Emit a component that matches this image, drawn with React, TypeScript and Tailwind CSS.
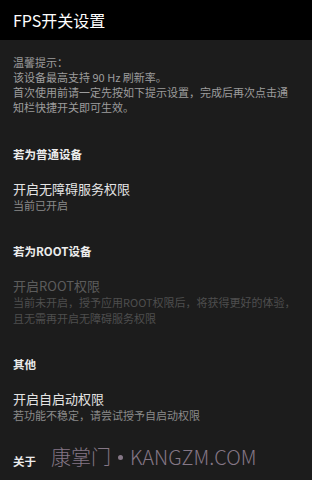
const font = "font-['Noto_Sans_CJK_SC','Noto_Sans',sans-serif]";

function SectionHeader({ label, className = "" }: { label: string; className?: string }) {
  return (
    <div className={`text-[11.5px] font-semibold leading-4 text-[#ececec] ${className}`}>{label}</div>
  );
}

function SettingItem({
  title,
  lines,
  disabled = false,
}: {
  title: string;
  lines: string[];
  disabled?: boolean;
}) {
  return (
    <div className="mt-[19px]">
      <div
        className={`text-[13px] leading-4 ${disabled ? "text-[#5c5c5c]" : "text-[#e4e4e4]"}`}
      >
        {title}
      </div>
      {lines.map((line) => (
        <div
          key={line}
          className={`whitespace-nowrap text-[11px] leading-4 ${
            disabled ? "text-[#4e4e4e]" : "text-[#8a8a8a]"
          }`}
        >
          {line}
        </div>
      ))}
    </div>
  );
}

export default function App() {
  return (
    <div className={`relative h-[480px] w-[312px] overflow-hidden bg-[#1c1c1c] ${font}`}>
      <header className="flex h-10 items-center bg-black px-[13px]">
        <h1 className="text-[16px] font-normal text-white">FPS开关设置</h1>
      </header>

      <div className="px-[13px]">
        <div className="pt-[15px] text-[11px] leading-[15px] text-[#9c9c9c]">
          <div>温馨提示：</div>
          <div>该设备最高支持 90 Hz 刷新率。</div>
          <div className="whitespace-nowrap">首次使用前请一定先按如下提示设置，完成后再次点击通</div>
          <div>知栏快捷开关即可生效。</div>
        </div>

        <SectionHeader label="若为普通设备" className="mt-[31px]" />
        <SettingItem title="开启无障碍服务权限" lines={["当前已开启"]} />

        <SectionHeader label="若为ROOT设备" className="mt-[30px]" />
        <SettingItem
          title="开启ROOT权限"
          disabled
          lines={["当前未开启，授予应用ROOT权限后，将获得更好的体验，", "且无需再开启无障碍服务权限"]}
        />

        <SectionHeader label="其他" className="mt-[30px]" />
        <SettingItem title="开启自启动权限" lines={["若功能不稳定，请尝试授予自启动权限"]} />

        <SectionHeader label="关于" className="mt-[30px]" />
      </div>

      {/* watermark overlay */}
      <div className="pointer-events-none absolute left-[51px] top-[445px] flex items-center whitespace-nowrap text-[20px] font-light leading-6 text-[#857786]">
        <span>康掌门</span>
        <span className="mx-[7px] h-[5px] w-[5px] rounded-full bg-[#857786]" />
        <span>KANGZM.COM</span>
      </div>
    </div>
  );
}
